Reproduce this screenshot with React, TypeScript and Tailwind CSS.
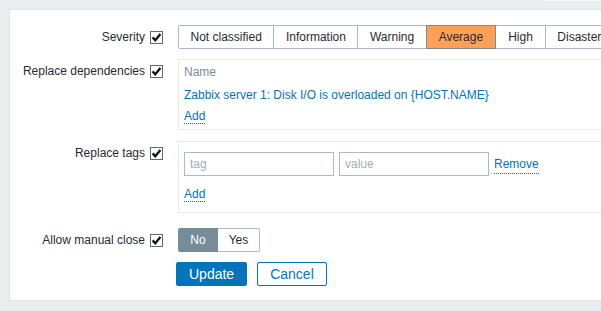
import type { ReactNode } from 'react'

const severities = ['Not classified', 'Information', 'Warning', 'Average', 'High', 'Disaster']

function Check() {
  return (
    <span className="ml-[5px] flex h-[13px] w-[13px] shrink-0 items-center justify-center border border-[#5f6a70] bg-white">
      <svg width="11" height="11" viewBox="0 0 11 11">
        <path d="M1.6 5.4 L4.3 8.2 L9.4 2" fill="none" stroke="#111" strokeWidth="2.3" />
      </svg>
    </span>
  )
}

function Row({ label, children, className = '' }: { label: string; children: ReactNode; className?: string }) {
  return (
    <div className={`flex items-start ${className}`}>
      <div className="flex h-[24px] w-[168px] shrink-0 items-center justify-end pr-[15px]">
        <span>{label}</span>
        <Check />
      </div>
      {children}
    </div>
  )
}

function DottedLink({ children }: { children: ReactNode }) {
  return <span className="border-b border-dotted border-[#0275b8] text-[#0275b8]">{children}</span>
}

export default function App() {
  return (
    <div className="relative h-[311px] w-[601px] overflow-hidden bg-[#ebeef0] font-['Liberation_Sans',Arial,sans-serif] text-[12px] text-[#1f2c33]">
      <div className="absolute left-[542px] top-0 h-px w-[59px] bg-[#f5f6f7]" />

      <div className="ml-[9px] mt-[9px] w-[640px] border border-[#dfe4e7] bg-white pb-[14px] pt-[15px]">
        <Row label="Severity" className="!items-center">
          <div className="flex">
            {severities.map((s, i) => (
              <div
                key={s}
                className={`flex h-[24px] items-center whitespace-nowrap border ${
                  s === 'Average' || s === 'High' ? 'px-[12px]' : 'px-[11.5px]'
                } ${i > 0 ? '-ml-px' : 'rounded-l-[2px]'} ${
                  s === 'Average' ? 'relative z-10 border-[#768d99] bg-[#ffa059]' : 'border-[#acbbc2] bg-white'
                }`}
              >
                {s}
              </div>
            ))}
          </div>
        </Row>

        <Row label="Replace dependencies" className="mt-[10px]">
          <div className="w-[440px] border border-[#e6eaec] pb-[2px] pl-[5px]">
            <div className="h-[24px] leading-[24px] text-[#768d99]">Name</div>
            <div className="h-[22px] leading-[22px] text-[#0275b8]">Zabbix server 1: Disk I/O is overloaded on {'{HOST.NAME}'}</div>
            <div className="h-[21px] leading-[21px]">
              <DottedLink>Add</DottedLink>
            </div>
          </div>
        </Row>

        <Row label="Replace tags" className="mt-[11px]">
          <div className="w-[440px] border border-[#e6eaec] pb-[6px] pl-[5px] pt-[10px]">
            <div className="flex items-center gap-[5px]">
              <input
                placeholder="tag"
                className="h-[24px] w-[150px] border border-[#acbbc2] px-[5px] outline-none placeholder:text-[#a3aeb4]"
              />
              <input
                placeholder="value"
                className="h-[24px] w-[150px] border border-[#acbbc2] px-[5px] outline-none placeholder:text-[#a3aeb4]"
              />
              <DottedLink>Remove</DottedLink>
            </div>
            <div className="mt-[6px] h-[24px] leading-[24px]">
              <DottedLink>Add</DottedLink>
            </div>
          </div>
        </Row>

        <Row label="Allow manual close" className="mt-[15px]">
          <div className="flex h-[24px]">
            <div className="flex w-[40px] items-center justify-center rounded-l-[2px] border border-[#768d99] bg-[#768d99] text-white">No</div>
            <div className="flex w-[42px] items-center justify-center rounded-r-[2px] border border-l-0 border-[#acbbc2] bg-white">Yes</div>
          </div>
        </Row>

        <div className="ml-[166px] mt-[10px] flex gap-[10px] text-[14px]">
          <button className="h-[24px] rounded-[2px] border border-[#0275b8] bg-[#0275b8] px-3 text-white">Update</button>
          <button className="h-[24px] rounded-[2px] border border-[#0275b8] bg-white px-3 text-[#0275b8]">Cancel</button>
        </div>
      </div>
    </div>
  )
}
